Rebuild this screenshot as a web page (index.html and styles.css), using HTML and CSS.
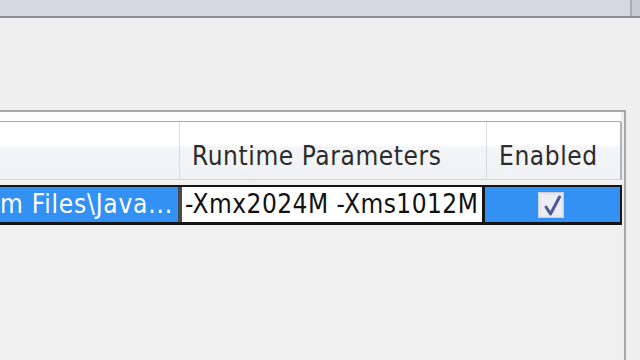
FILE: index.html
```html
<!DOCTYPE html>
<html>
<head>
<meta charset="utf-8">
<link rel="stylesheet" href="styles.css">
</head>
<body>
<div class="topbar"><div class="topbar-main"></div><div class="topbar-end"></div></div>
<div class="pane">
  <div class="strip"></div>
  <div class="header">
    <div class="hcell c1"></div>
    <div class="hcell c2">Runtime Parameters</div>
    <div class="hcell c3">Enabled</div>
  </div>
  <div class="gap"></div>
  <div class="row">
    <div class="cell c1 sel"><span class="path">m Files\Java...</span></div>
    <div class="cell c2 edit">-Xmx2024M -Xms1012M</div>
    <div class="cell c3 sel">
      <span class="check">
        <svg width="26" height="26" viewBox="0 0 26 26">
          <rect x="0.5" y="0.5" width="25" height="25" fill="#e4e6ec" stroke="#cdd0d8"/>
          <rect x="3" y="3" width="20" height="20" fill="#eceef3"/>
          <path d="M8 15 L12.5 22 L21.5 5" fill="none" stroke="#4b5a98" stroke-width="3" stroke-linejoin="round" stroke-linecap="round"/>
        </svg>
      </span>
    </div>
  </div>
  <div class="viewport"></div>
</div>
</body>
</html>
```

FILE: styles.css
```css
html, body {
  margin: 0;
  padding: 0;
}
body {
  width: 640px;
  height: 360px;
  overflow: hidden;
  background: #efefef;
  font-family: "DejaVu Sans Condensed", "DejaVu Sans", sans-serif;
  font-stretch: condensed;
}
.topbar {
  display: flex;
  height: 16px;
  border-bottom: 2px solid #8d9196;
}
.topbar-main {
  flex: 1;
  background: #d2d9e1;
}
.topbar-end {
  width: 8px;
  background: #c6ccd3;
  border-left: 2px solid #a9aeb4;
}
.pane {
  margin-top: 92px;
  width: 624px;
  border-top: 2px solid #a6a6a6;
  border-right: 2px solid #a6a6a6;
  display: flex;
  flex-direction: column;
  height: 260px;
}
.strip {
  height: 9px;
  background: #fdfdfd;
  border-bottom: 1px solid #aaaaaa;
  margin-right: 3px;
}
.header {
  display: grid;
  grid-template-columns: 180px 307px 133px;
  height: 57px;
  border-bottom: 1px solid #d6d6d6;
  border-right: 2px solid #b4b4b4;
  width: 620px;
  background: linear-gradient(#ffffff 0, #ffffff 40%, #f4f5f7 45%, #f1f2f4 100%);
}
.hcell {
  border-right: 1px solid #dcdcdc;
  font-size: 26px;
  letter-spacing: 0.6px;
  color: #2c2c2c;
  padding-top: 19px;
  box-sizing: border-box;
  white-space: nowrap;
}
.hcell.c2 { padding-left: 12px; }
.hcell.c3 { padding-left: 12px; border-right: none; }
.gap {
  height: 5px;
  width: 622px;
  background: #f2f2f2;
}
.row {
  display: grid;
  grid-template-columns: 178px 307px 135px;
  height: 35px;
  width: 620px;
  border-top: 2px solid #151515;
  border-bottom: 3px solid #151515;
  border-right: 2px solid #151515;
  font-size: 26px;
  letter-spacing: 0.55px;
}
.cell {
  box-sizing: border-box;
  white-space: nowrap;
  overflow: hidden;
  line-height: 35px;
}
.sel {
  background: #3391f4;
  color: #ffffff;
}
.cell.c1 { padding-left: 0; letter-spacing: 0.8px; }
.edit {
  background: #ffffff;
  color: #111111;
  border-left: 4px solid #4a4a4a;
  border-right: 3px solid #151515;
  padding-left: 3px;
  letter-spacing: 0.45px;
}
.cell.c3 {
  display: flex;
  align-items: center;
  justify-content: center;
  padding-right: 4px;
}
.check {
  display: block;
  width: 26px;
  height: 26px;
}
.check svg { display: block; }
.viewport {
  flex: 1;
  width: 622px;
  background: #f0f0f0;
}
```
